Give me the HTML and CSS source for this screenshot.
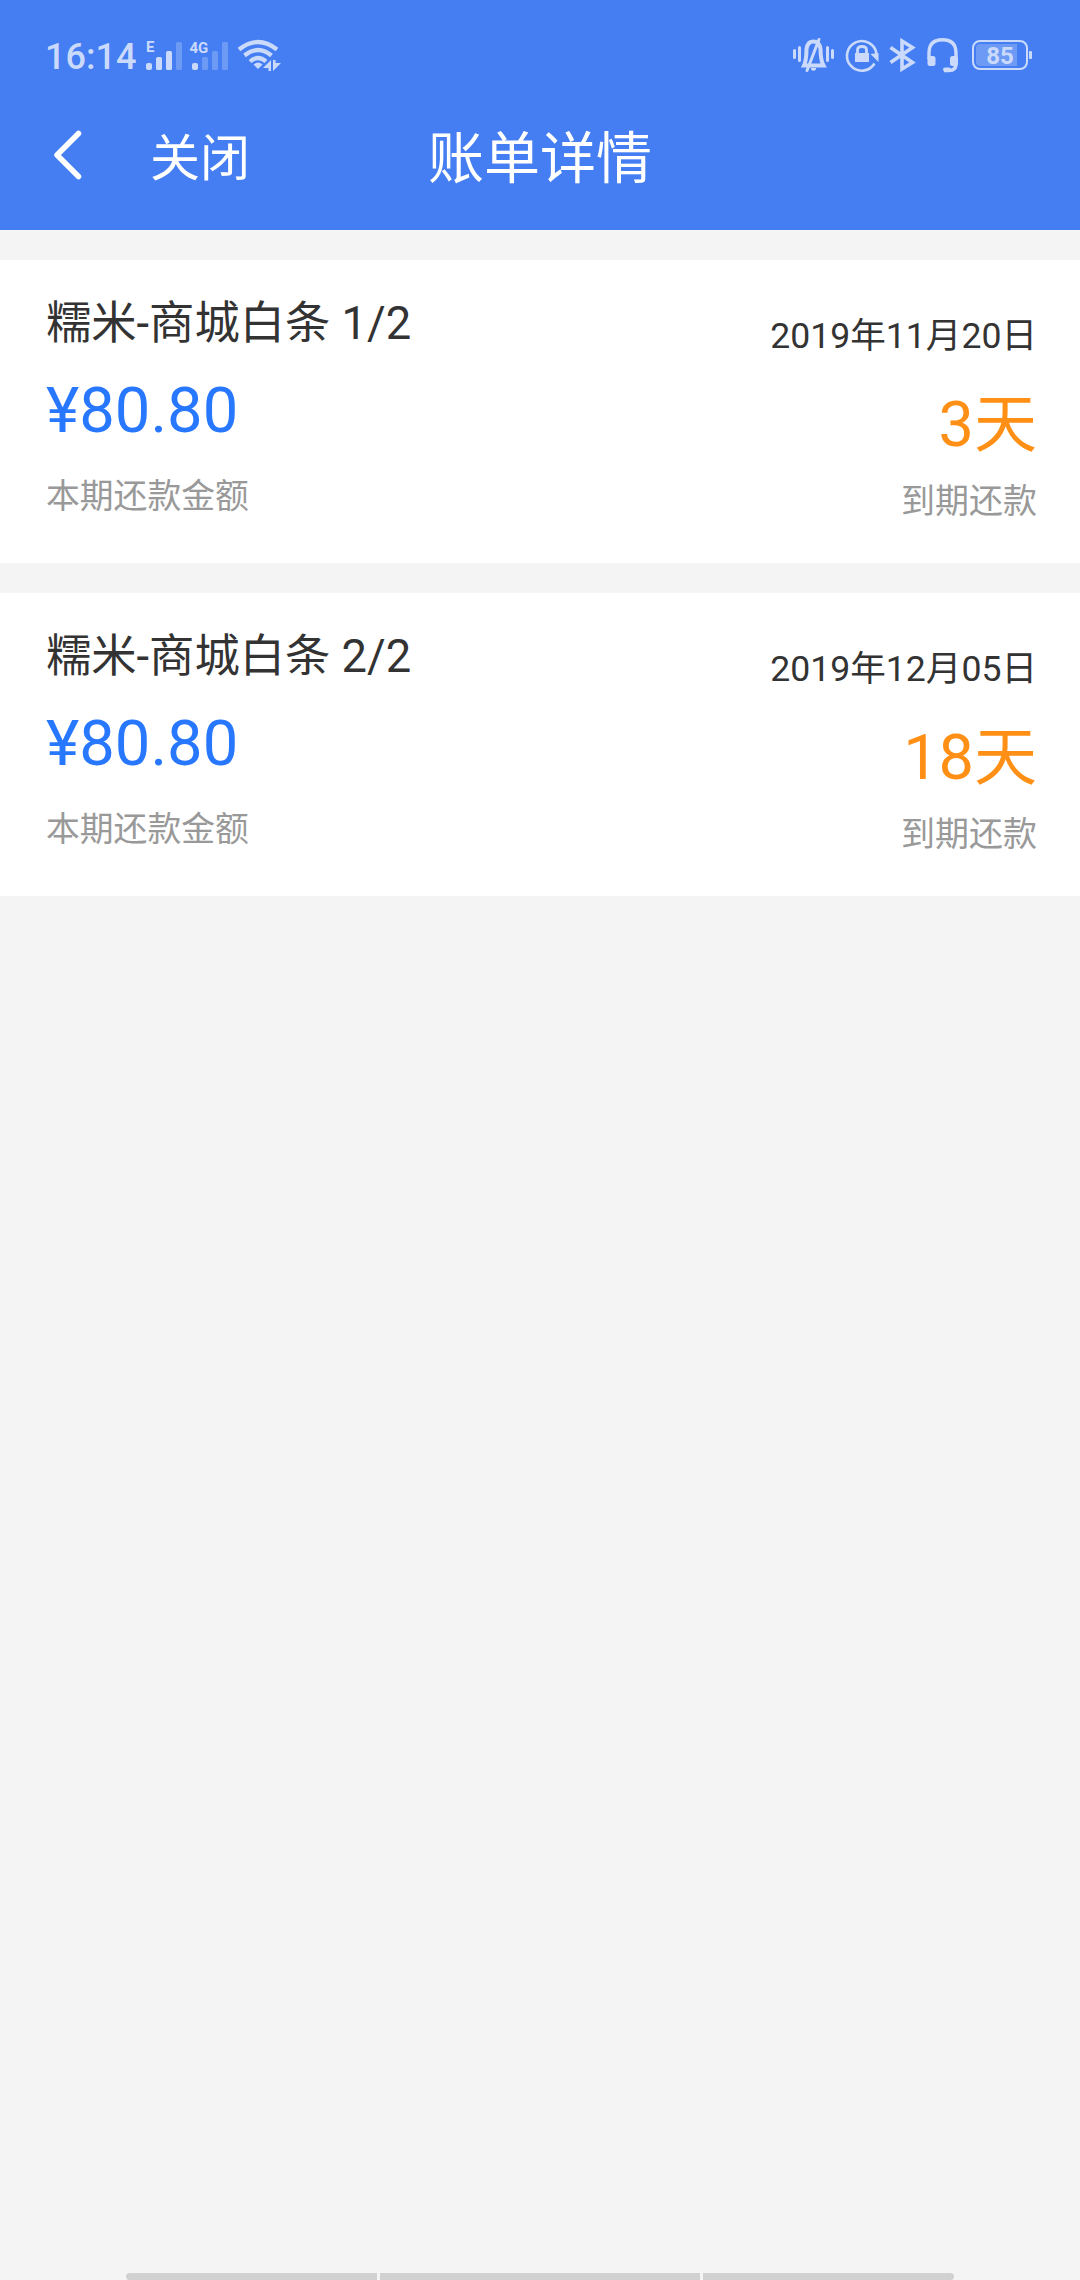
FILE: index.html
```html
<!DOCTYPE html>
<html lang="zh-CN">
<head>
<meta charset="utf-8">
<title>账单详情</title>
<link rel="stylesheet" href="styles.css">
</head>
<body>
<header class="header">
  <div class="status">
    <div class="status-left">
      <span class="clock">16:14</span>
      <svg class="signal" width="39" height="34" viewBox="145 37 39 34">
        <text x="146" y="51" class="net">E</text>
        <rect x="146" y="62" width="6" height="7" rx="2"/>
        <rect x="156" y="56" width="6" height="13" rx="1.5"/>
        <rect x="166" y="50" width="6" height="19" rx="1.5"/>
        <rect x="176" y="41" width="6" height="28" rx="1.5" class="dim"/>
      </svg>
      <svg class="signal" width="42" height="34" viewBox="189 37 42 34">
        <text x="189.5" y="52" class="net">4G</text>
        <rect x="192" y="62" width="6" height="7" rx="2"/>
        <rect x="202" y="56" width="6" height="13" rx="1.5" class="dim"/>
        <rect x="212" y="50" width="6" height="19" rx="1.5" class="dim"/>
        <rect x="222" y="41" width="6" height="28" rx="1.5" class="dim"/>
      </svg>
      <svg class="wifi" width="46" height="34" viewBox="237 38 46 34">
        <g fill="none" stroke="currentColor" stroke-width="4.200">
          <path d="M239 49.500Q258 34.500 277 49.500"/>
          <path d="M244.500 55.500Q258 44.500 271.500 55.500"/>
          <path d="M250 61.500Q258 54.500 266 61.500"/>
        </g>
        <path d="M253.500 64.500Q258 60.500 262.500 64.500L258 69Z"/>
        <path d="M271 60V71H268.500V68H263ZM273 60V71L281 63H275.500V60Z"/>
      </svg>
    </div>
    <div class="status-right">
      <svg width="43" height="36" viewBox="792 37 43 36">
        <g fill="none" stroke="currentColor" stroke-width="3" stroke-linecap="round">
          <path d="M794.500 50.500V57.500M799.500 47.500V60.500M827.500 47.500V60.500M832.500 50.500V57.500"/>
          <path d="M804 65.500Q806.500 60 806.500 49Q807.500 41.500 813.500 41.500Q819.500 41.500 820.500 49Q820.500 60 823.500 65.500Z" stroke-width="4" stroke-linecap="butt"/>
          <path d="M819 39.500L807 70.500"/>
        </g>
        <path d="M811 68H816V69.500Q813.500 72 811 69.500Z"/>
      </svg>
      <svg width="34" height="34" viewBox="845 38 34 34">
        <path d="M874.500 63.500A14.800 14.800 0 1 1 876.500 54" fill="none" stroke="currentColor" stroke-width="2.600"/>
        <path d="M870.500 54L878.500 53V62Z"/>
        <rect x="855" y="53" width="14" height="9"/>
        <path d="M857.500 53V50Q857.500 46.500 862 46.500Q866.500 46.500 866.500 50V53" fill="none" stroke="currentColor" stroke-width="2.800"/>
      </svg>
      <svg width="28" height="34" viewBox="889 38 28 34">
        <path d="M890.500 47.500L912.500 62.500L902 69V41L912.500 47.500L890.500 62.500" fill="none" stroke="currentColor" stroke-width="3.600"/>
      </svg>
      <svg width="32" height="36" viewBox="927 37 32 36">
        <path d="M929 59V53Q929 39.700 942.500 39.700Q956 39.700 956 53V64Q956 70.500 949 70.500H944" fill="none" stroke="currentColor" stroke-width="3.400"/>
        <rect x="927.500" y="56" width="8" height="10" rx="2.500"/>
        <rect x="950" y="56" width="8" height="10" rx="2.500"/>
        <rect x="943" y="67.500" width="8" height="4" rx="2"/>
      </svg>
      <svg class="battery" width="62" height="32" viewBox="971 39 62 32">
        <rect x="973" y="41" width="54" height="28" rx="7" fill="none" stroke="currentColor" stroke-width="2"/>
        <path d="M980 44H1017V66H980Q976 66 976 62V48Q976 44 980 44Z" class="dim"/>
        <rect x="1029" y="51" width="3" height="8" rx="1"/>
        <text x="1000" y="64" text-anchor="middle" class="level">85</text>
      </svg>
    </div>
  </div>
  <nav class="nav">
    <div class="nav-left">
      <svg class="back" width="30" height="50" viewBox="0 0 30 50"><path d="M25.500 3.500L4 25L25.500 46.500" fill="none" stroke="#fff" stroke-width="5.500" stroke-linecap="round" stroke-linejoin="round"/></svg>
      <span class="close">关闭</span>
    </div>
    <h1 class="title">账单详情</h1>
  </nav>
</header>
<main class="bills">
  <section class="bill">
    <div class="info">
      <div class="name">糯米-商城白条 1/2</div>
      <div class="amount">¥80.80</div>
      <div class="caption">本期还款金额</div>
    </div>
    <div class="due">
      <div class="date">2019年11月20日</div>
      <div class="days">3天</div>
      <div class="note">到期还款</div>
    </div>
  </section>
  <section class="bill">
    <div class="info">
      <div class="name">糯米-商城白条 2/2</div>
      <div class="amount">¥80.80</div>
      <div class="caption">本期还款金额</div>
    </div>
    <div class="due">
      <div class="date">2019年12月05日</div>
      <div class="days">18天</div>
      <div class="note">到期还款</div>
    </div>
  </section>
</main>
<footer class="gesture"><i></i><i></i><i></i></footer>
</body>
</html>
```
FILE: styles.css
```css
* { box-sizing: border-box; }
body {
  margin: 0;
  height: 2280px;
  display: flex;
  flex-direction: column;
  overflow: hidden;
  background: #f4f4f4;
  color: #333;
  font-family: Roboto, "Noto Sans CJK SC", sans-serif;
  white-space: nowrap;
}
svg { display: block; flex: none; fill: currentColor; }
.header { height: 230px; background: #447ef2; }
.status {
  height: 110px;
  padding: 0 47px 0 45px;
  display: flex;
  justify-content: space-between;
  align-items: center;
  color: #cbdafb;
}
.status-left, .status-right { display: flex; align-items: center; }
.clock { width: 100px; font-size: 36px; font-weight: 500; line-height: 44px; padding-top: 4px; }
.signal { margin-right: 5px; }
.wifi { margin-left: 1px; }
.status-right { gap: 10px; }
.battery { margin-left: 2px; }
.net { font-size: 15px; font-weight: 700; }
.level { font-size: 24px; font-weight: 700; }
.dim { opacity: .3; }
.nav {
  height: 90px;
  display: grid;
  grid-template-columns: 1fr auto 1fr;
  align-items: center;
  color: #fff;
}
.nav-left { display: flex; align-items: center; padding-left: 53px; }
.back { margin-top: -1px; }
.close { margin-left: 67px; padding-top: 9px; font-size: 50px; line-height: 81px; }
.title { margin: 0; padding-top: 9px; font-size: 56px; font-weight: 400; line-height: 81px; }
.bills { padding-top: 30px; display: grid; gap: 30px; }
.bill {
  height: 303px;
  padding: 0 43px 0 46px;
  display: flex;
  justify-content: space-between;
  background: #fff;
}
.info { padding-top: 37px; }
.due { padding-top: 51px; text-align: right; }
.name { font-size: 45.3px; line-height: 54px; }
.amount { font-size: 63.3px; line-height: 119px; color: #2878ff; }
.caption { font-size: 33.8px; line-height: 53px; color: #999; }
.date { font-size: 35.6px; line-height: 50px; }
.days { font-size: 63px; line-height: 128px; color: #ff9015; }
.note { font-size: 34px; line-height: 25px; color: #999; }
.gesture {
  height: 7px;
  margin: auto 126px 0;
  display: grid;
  grid-template-columns: 251px 1fr 251px;
  gap: 3px;
}
.gesture i { background: #d1d1d1; }
.gesture i:first-child { border-radius: 4px 0 0 4px; }
.gesture i:last-child { border-radius: 0 4px 4px 0; }
```
